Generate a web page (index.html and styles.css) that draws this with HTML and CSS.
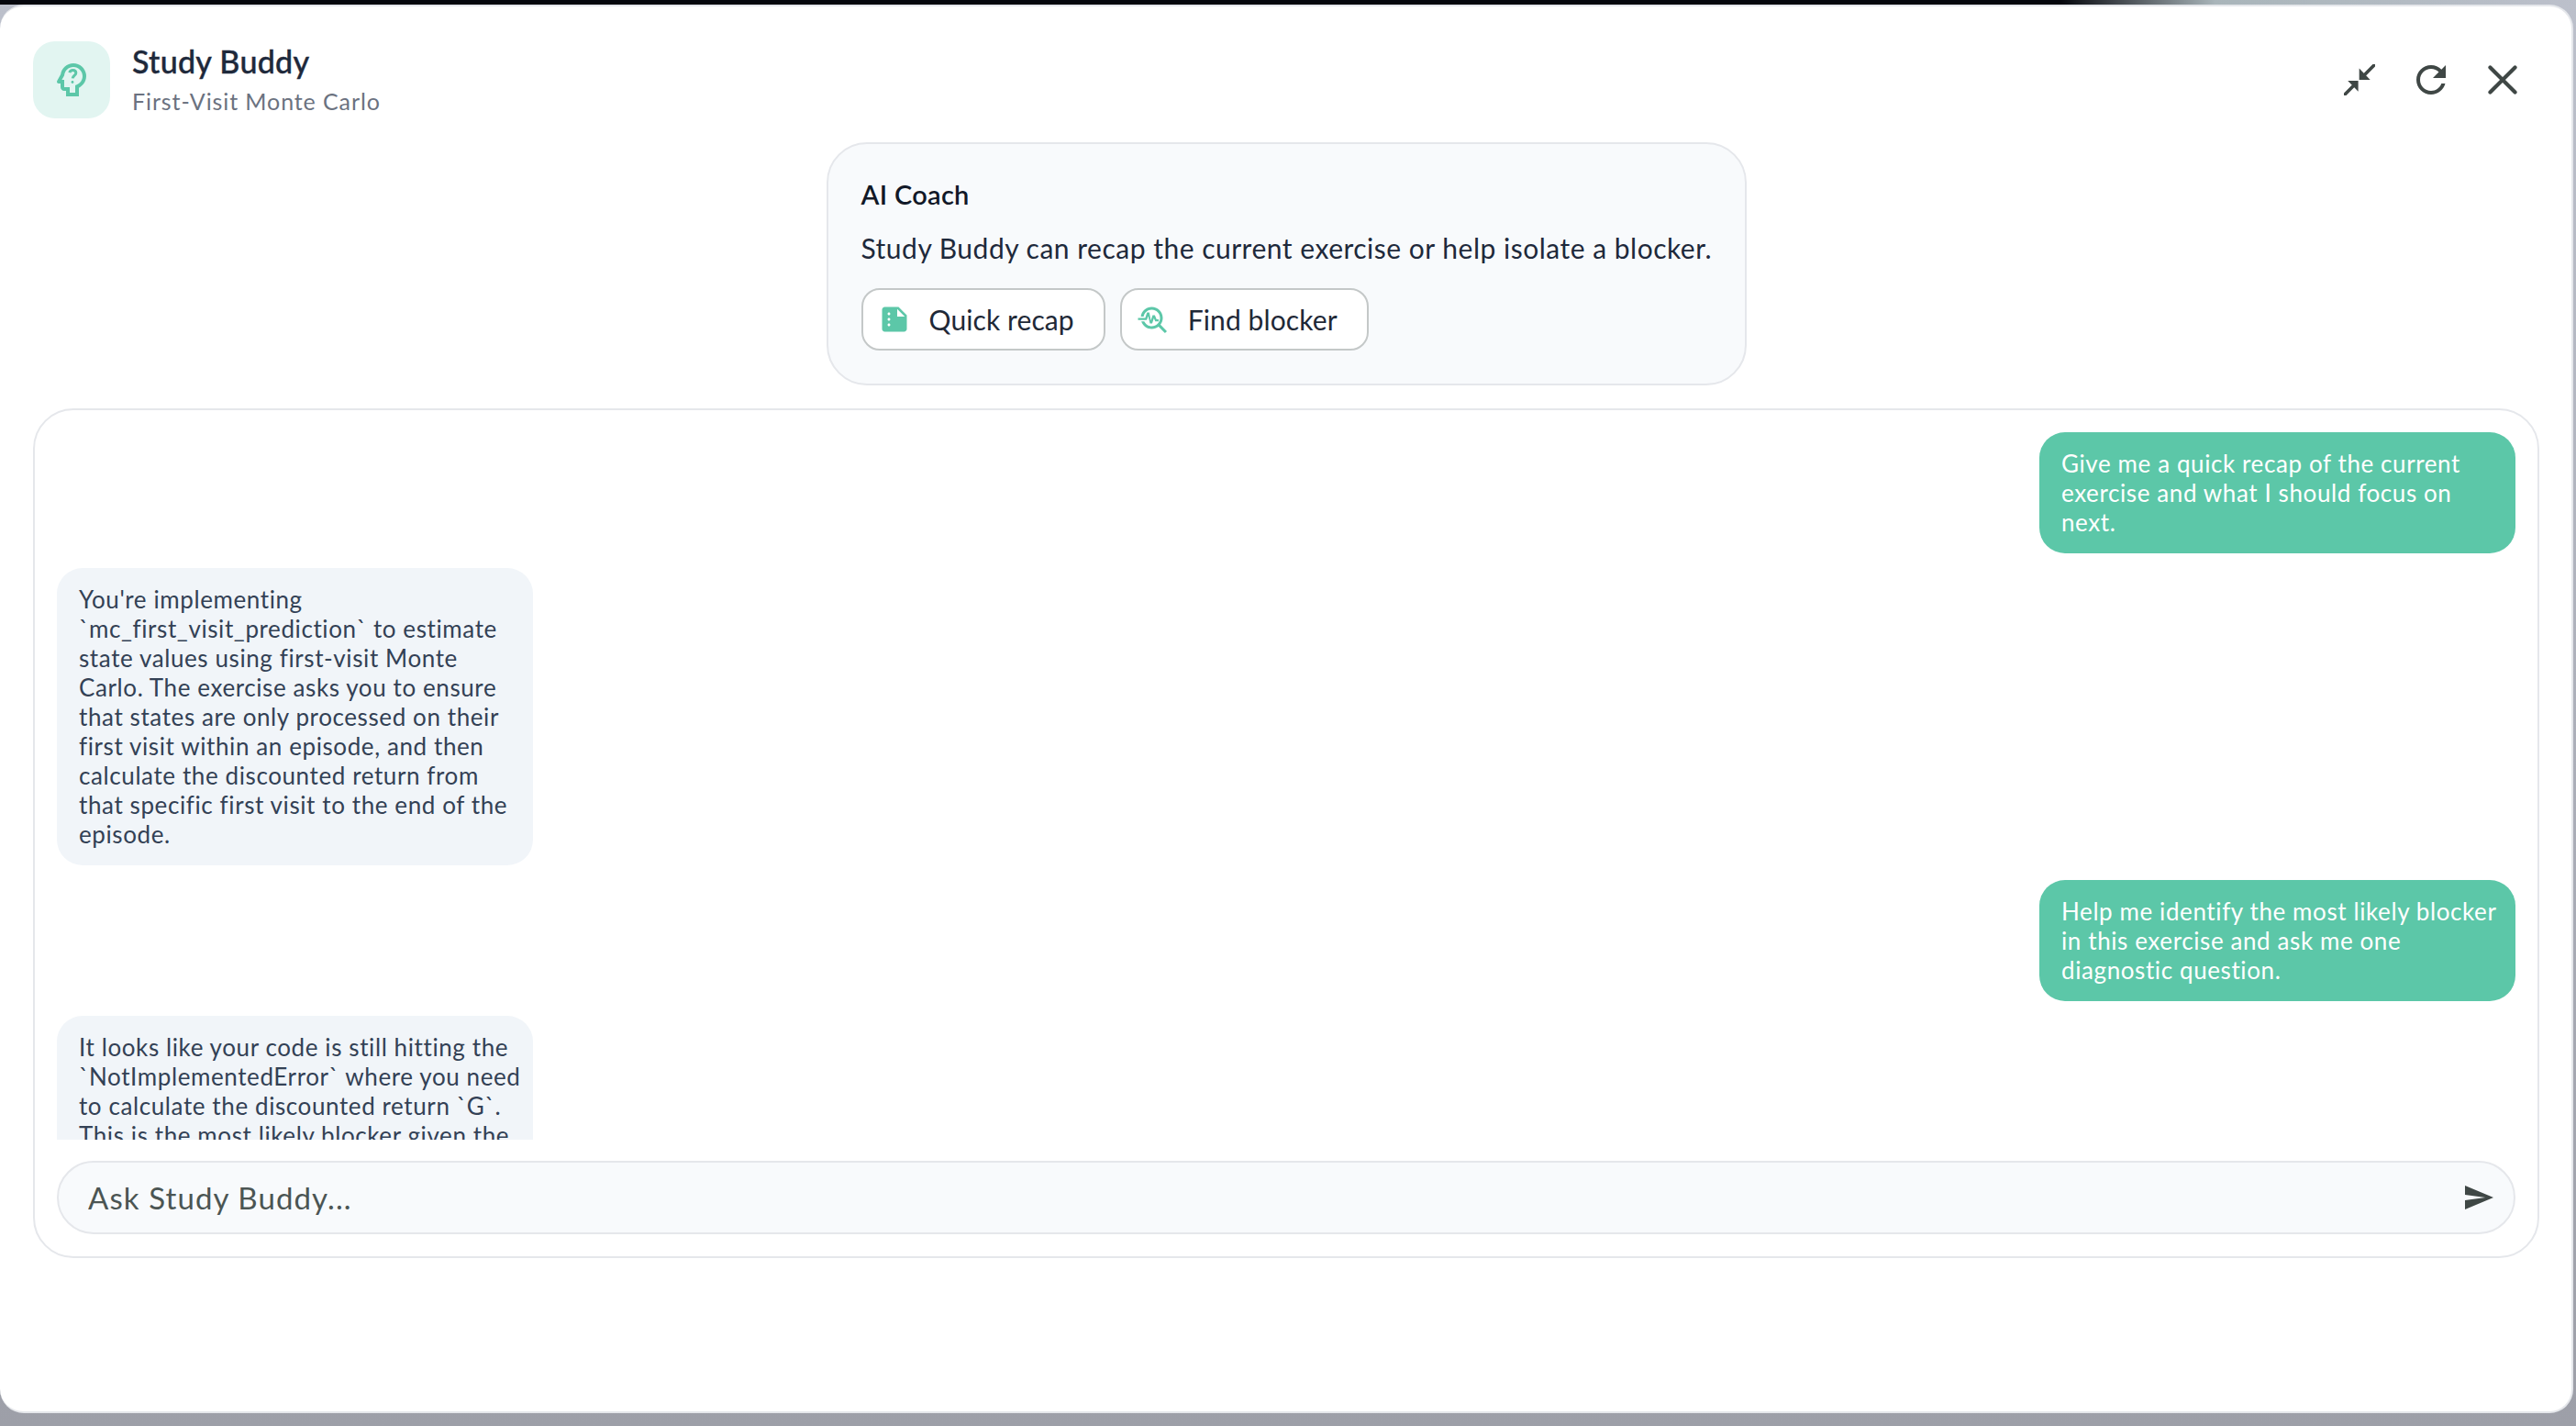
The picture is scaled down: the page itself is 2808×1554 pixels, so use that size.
FILE: index.html
```html
<!DOCTYPE html>
<html lang="en">

<head>
  <meta charset="UTF-8">
  <title>Study Buddy</title>
  <link rel="stylesheet" href="styles.css">
</head>

<body>
  <div class="modal">
    <header class="modal-header">
      <div class="brand">
        <div class="brand-icon">
          <svg viewBox="0 0 24 24" width="48" height="48">
            <path d="M19.94 9.06C19.5 5.73 16.57 3 13 3 9.47 3 6.57 5.61 6.08 9l-1.93 3.48C3.74 13.14 4.22 14 5 14h1v2c0 1.1.9 2 2 2h1v3h7v-4.68c2.62-1.25 4.35-4.08 3.94-7.26zM14.89 14.63 14 15.05V19h-3v-3H8v-4H6.7l1.33-2.33C8.21 7.06 10.35 5 13 5c2.76 0 5 2.24 5 5 0 2.09-1.29 3.88-3.11 4.63z" />
            <path d="M12.5 12.54c-.41 0-.74.31-.74.73 0 .41.33.74.74.74.42 0 .73-.33.73-.74 0-.42-.31-.73-.73-.73z" />
            <path class="brand-mark" d="M10.9 8.1c.2-.7.8-1.3 1.8-1.3 1 0 1.7.6 1.7 1.5 0 1.3-1.6 1.3-1.8 2.9" />
          </svg>
        </div>
        <div class="brand-text">
          <div class="brand-title">Study Buddy</div>
          <div class="brand-sub">First-Visit Monte Carlo</div>
        </div>
      </div>
      <div class="header-actions">
        <button class="icon-btn">
          <svg viewBox="0 0 32 32" width="34" height="34">
            <path d="M15.7 16V4.3L27 16z" />
            <path d="M14.7 17v11L4 17z" />
            <path class="arrow-line" d="M21 11 31 1M11 21 1 31" />
          </svg>
        </button>
        <button class="icon-btn">
          <svg viewBox="0 0 24 24" width="48" height="48">
            <path d="M17.65 6.35C16.2 4.9 14.21 4 12 4c-4.42 0-7.99 3.58-7.99 8s3.57 8 7.99 8c3.73 0 6.84-2.55 7.73-6h-2.08c-.82 2.33-3.04 4-5.65 4-3.31 0-6-2.69-6-6s2.69-6 6-6c1.66 0 3.14.69 4.22 1.78L13 11h7V4l-2.35 2.35z" />
          </svg>
        </button>
        <button class="icon-btn">
          <svg viewBox="0 0 26 26" width="32" height="32">
            <path class="arrow-line" d="M2 2 24 24M24 2 2 24" />
          </svg>
        </button>
      </div>
    </header>

    <section class="coach">
      <div class="coach-title">AI Coach</div>
      <p class="coach-desc">Study Buddy can recap the current exercise or help isolate a blocker.</p>
      <div class="coach-actions">
        <button class="coach-btn">
          <svg viewBox="0 0 24 24" width="36" height="36">
            <path d="M15 3H5c-1.1 0-1.99.9-1.99 2L3 19c0 1.1.89 2 1.99 2H19c1.1 0 2-.9 2-2V9l-6-6zM8 17c-.55 0-1-.45-1-1s.45-1 1-1 1 .45 1 1-.45 1-1 1zm0-4c-.55 0-1-.45-1-1s.45-1 1-1 1 .45 1 1-.45 1-1 1zm0-4c-.55 0-1-.45-1-1s.45-1 1-1 1 .45 1 1-.45 1-1 1zm6 1V4.5l5.5 5.5H14z" />
          </svg>
          Quick recap
        </button>
        <button class="coach-btn">
          <svg viewBox="0 0 24 24" width="36" height="36">
            <path d="M22 20.59l-4.69-4.69C18.37 14.55 19 12.85 19 11c0-4.42-3.58-8-8-8-4.08 0-7.44 3.05-7.93 7h2.02C5.57 7.17 8.03 5 11 5c3.31 0 6 2.69 6 6s-2.69 6-6 6c-2.42 0-4.5-1.44-5.45-3.5H3.4C4.45 16.69 7.46 19 11 19c1.85 0 3.55-.63 4.9-1.69L20.59 22 22 20.59z" />
            <path d="M8.43 9.69 9.65 15h1.64l1.26-3.78.95 2.28h2.5v-1.5h-1.5l-1.25-3h-1.65l-1.25 3.76L9.22 7H7.57L6.25 11H1v1.5h6.34z" />
          </svg>
          Find blocker
        </button>
      </div>
    </section>

    <section class="chat">
      <div class="chat-messages">
        <div class="msg msg-user">Give me a quick recap of the current exercise and what I should focus on next.</div>
        <div class="msg msg-bot">You're implementing `mc_first_visit_prediction` to estimate state values using first-visit Monte Carlo. The exercise asks you to ensure that states are only processed on their first visit within an episode, and then calculate the discounted return from that specific first visit to the end of the episode.</div>
        <div class="msg msg-user">Help me identify the most likely blocker in this exercise and ask me one diagnostic question.</div>
        <div class="msg msg-bot msg-wide">It looks like your code is still hitting the `NotImplementedError` where you need to calculate the discounted return `G`. This is the most likely blocker given the</div>
      </div>
      <div class="chat-input">
        <input class="chat-field" type="text" placeholder="Ask Study Buddy...">
        <button class="send-btn">
          <svg viewBox="0 0 21 18" width="31" height="26" preserveAspectRatio="none">
            <path d="M0 18 21 9 0 0v7l15 2-15 2z" />
          </svg>
        </button>
      </div>
    </section>
  </div>
</body>

</html>
```

FILE: styles.css
```css
* {
  margin: 0;
  padding: 0;
  box-sizing: border-box;
}

html,
body {
  height: 100%;
}

body {
  padding: 5px 3px 14px 0;
  overflow: hidden;
  font-family: "Lato", "Liberation Sans", sans-serif;
  background:
    linear-gradient(90deg, #05070d 0%, #05070d 80%, #a9b5ba 86%, #bcc0cb 100%) top / 100% 5px no-repeat,
    linear-gradient(180deg, #bcc0cb 0%, #9d9fa8 100%);
}

button {
  border: none;
  background: none;
  font-family: inherit;
  cursor: pointer;
}

.modal {
  height: 100%;
  padding: 38px 35px 0 36px;
  background-color: #fff;
  border: solid #e5e7eb;
  border-width: 2px 2px 2px 0;
  border-radius: 26px;
}

.modal-header {
  display: flex;
  justify-content: space-between;
  align-items: center;
  height: 84px;
}

.brand {
  display: flex;
  align-items: center;
  gap: 24px;
}

.brand-icon {
  display: flex;
  justify-content: center;
  align-items: center;
  width: 84px;
  height: 84px;
  background-color: #e2f5f1;
  border-radius: 24px;
}

.brand-icon svg {
  fill: #5cc7a8;
}

.brand-mark {
  fill: none;
  stroke: #5cc7a8;
  stroke-width: 1.5;
}

.brand-text {
  padding-bottom: 3px;
}

.brand-title {
  font-size: 34px;
  line-height: 44px;
  font-weight: 500;
  letter-spacing: 0.3px;
  color: #1e293b;
  -webkit-text-stroke: 0.4px #1e293b;
}

.brand-sub {
  margin-top: 4px;
  font-size: 25px;
  line-height: 34px;
  letter-spacing: 0.9px;
  color: #6b7280;
}

.header-actions {
  display: flex;
  align-items: center;
  gap: 30px;
  padding-right: 16px;
}

.icon-btn {
  display: flex;
  justify-content: center;
  align-items: center;
  width: 48px;
  height: 48px;
}

.icon-btn svg {
  fill: #3f4745;
}

.arrow-line {
  fill: none;
  stroke: #3f4745;
  stroke-width: 3.4;
  stroke-linecap: round;
}

.coach {
  width: 1003px;
  margin: 0 auto;
  margin-top: 26px;
  padding: 37px 28px 36px 36px;
  background-color: #f8fafc;
  border: 2px solid #e5e7eb;
  border-radius: 44px;
}

.coach-title {
  font-size: 29px;
  line-height: 36px;
  font-weight: 600;
  letter-spacing: 0.3px;
  color: #111827;
}

.coach-desc {
  margin-top: 20px;
  font-size: 30px;
  line-height: 40px;
  letter-spacing: 0.5px;
  color: #1e293b;
}

.coach-actions {
  display: flex;
  gap: 16px;
  margin-top: 24px;
}

.coach-btn {
  display: flex;
  align-items: center;
  gap: 20px;
  height: 68px;
  padding: 0 32px 0 16px;
  font-size: 30px;
  letter-spacing: 0.1px;
  color: #1f2937;
  background-color: #fff;
  border: 2.5px solid #c4c8c8;
  border-radius: 20px;
}

.coach-btn svg {
  fill: #5cc7a8;
}

.chat {
  display: flex;
  flex-direction: column;
  height: 926px;
  margin-top: 25px;
  padding: 24px;
  border: 2px solid #e5e7eb;
  border-radius: 44px;
}

.chat-messages {
  display: flex;
  flex-direction: column;
  align-items: flex-start;
  gap: 16px;
  flex: 1;
  min-height: 0;
  overflow: hidden;
}

.msg {
  width: 519px;
  padding: 18px 17px 18px 24px;
  font-size: 26px;
  line-height: 32px;
  letter-spacing: 0.6px;
  border-radius: 28px;
  flex-shrink: 0;
}

.msg-user {
  align-self: flex-end;
  color: #fff;
  background-color: #5cc7a8;
}

.msg-bot {
  color: #334155;
  background-color: #f1f5f9;
}

.msg-wide {
  padding-right: 6px;
}

.chat-input {
  display: flex;
  align-items: center;
  height: 80px;
  margin-top: 23px;
  padding: 0 22px 0 32px;
  background-color: #f8fafc;
  border: 2px solid #e5e7eb;
  border-radius: 40px;
}

.chat-field {
  flex: 1;
  min-width: 0;
  font-family: inherit;
  font-size: 33px;
  letter-spacing: 1.1px;
  color: #3f4745;
  background: none;
  border: none;
  outline: none;
}

.chat-field::placeholder {
  color: #4b5553;
  opacity: 1;
}

.send-btn {
  display: flex;
}

.send-btn svg {
  fill: #3f4745;
}
```
